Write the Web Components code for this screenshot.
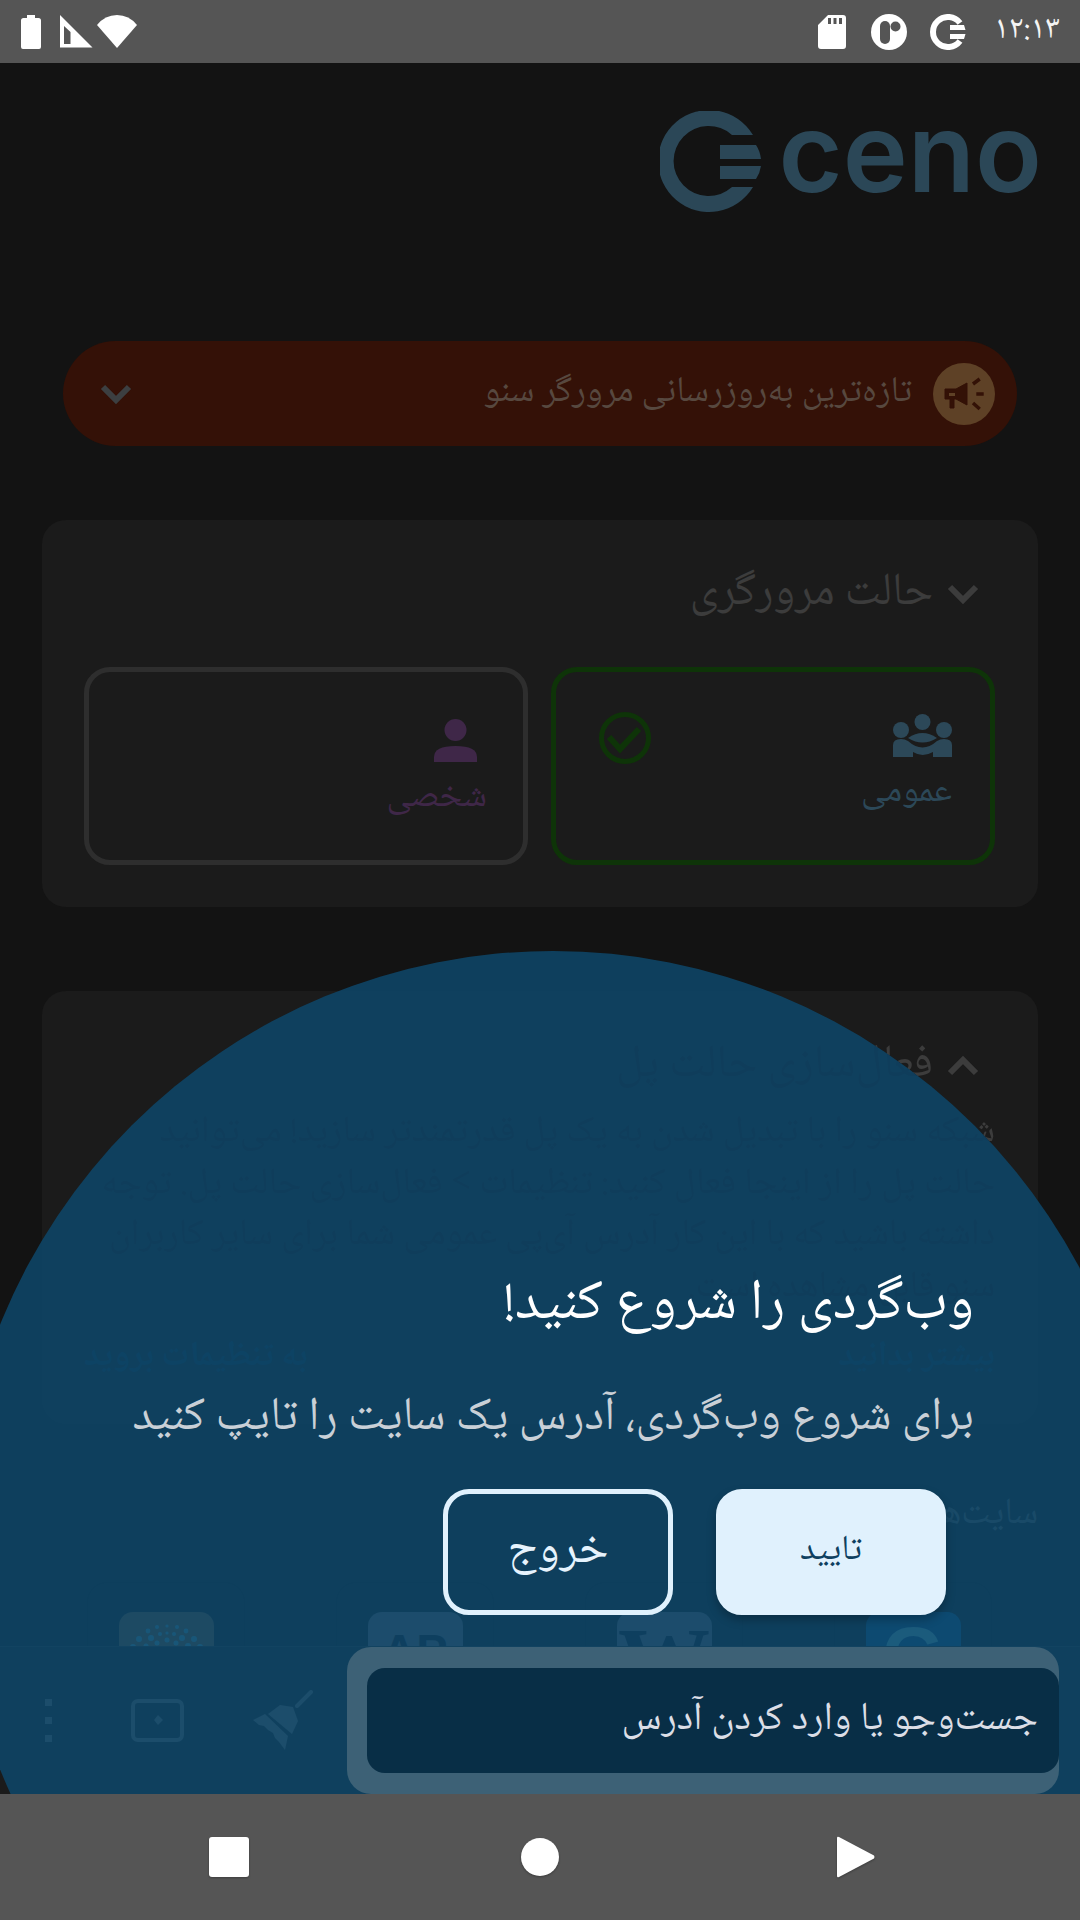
<!DOCTYPE html>
<html lang="fa" dir="rtl">
<head>
<meta charset="utf-8">
<style>
html,body{margin:0;padding:0;background:#131313}
body{width:1080px;height:1920px;overflow:hidden;font-family:"Noto Naskh Arabic","Noto Sans Arabic","DejaVu Sans",sans-serif}
</style>
</head>
<body>
<app-shell>
  <status-bar></status-bar>
  <main-area>
    <home-page>
      <ceno-logo></ceno-logo>
      <update-banner>تازه‌ترین به‌روزرسانی مرورگر سنو</update-banner>
      <mode-section></mode-section>
      <bridge-section></bridge-section>
      <sites-section></sites-section>
    </home-page>
    <bottom-bar></bottom-bar>
    <coach-mark></coach-mark>
  </main-area>
  <nav-bar></nav-bar>
</app-shell>
<script>
const FONT = '"Noto Naskh Arabic","Noto Sans Arabic","DejaVu Sans",sans-serif';
const GHOST = (out) => `color:transparent;background:radial-gradient(circle 596px at 553px 1547px,#180000 99.9%,${out} 100%) fixed;-webkit-background-clip:text;background-clip:text;`;
function def(name, html){
  customElements.define(name, class extends HTMLElement{
    constructor(){super();this.attachShadow({mode:'open'}).innerHTML=html;}
  });
}
const chevron = (up,c)=>`<svg width="32" height="20" viewBox="0 0 32 20"><path d="${up?'M3 17 16 4 29 17':'M3 3 16 16 29 3'}" fill="none" stroke="${c}" stroke-width="6"/></svg>`;

def('app-shell',`<style>:host{display:flex;flex-direction:column;width:1080px;height:1920px;background:#131313;direction:rtl}</style><slot></slot>`);

def('status-bar',`<style>
:host{display:flex;align-items:center;height:63px;flex:none;background:#555;direction:ltr;position:relative}
svg{display:block;flex:none}
.time{font:33px/1 ${FONT};color:#f4f4f4;margin:0 22px 0 29px;direction:rtl;width:62px;display:flex;justify-content:center;white-space:nowrap}
</style>
<svg style="margin-left:21px" width="20" height="34" viewBox="0 0 20 34"><path fill="#fff" d="M6 0h8v3h3.5A2.5 2.5 0 0 1 20 5.5V32a2 2 0 0 1-2 2H2a2 2 0 0 1-2-2V5.500A2.500 2.500 0 0 1 2.500 3H6z"/></svg>
<svg style="margin-left:19px" width="33" height="33" viewBox="0 0 33 33"><path fill="#fff" fill-rule="evenodd" d="M0 0 32.500 32.500H0zM4 11v18h6.500V17z"/></svg>
<svg style="margin-left:4px" width="40" height="34" viewBox="0 0 40 34"><path fill="#fff" d="M0 10Q8 0 20 0T40 10L20 33Z"/></svg>
<svg style="margin-left:auto" width="28" height="34" viewBox="0 0 28 34"><path fill="#fff" fill-rule="evenodd" d="M10 0h15a3 3 0 0 1 3 3v28a3 3 0 0 1-3 3H3a3 3 0 0 1-3-3V10zM10 3v6h3V3zM15.500 3v6h3V3zM21 3v6h3V3z"/></svg>
<svg style="margin-left:25px" width="36" height="36" viewBox="0 0 36 36"><circle cx="18" cy="18" r="18" fill="#fff"/><rect x="9" y="7" width="10" height="23" rx="5" fill="#555"/><circle cx="24.500" cy="12.500" r="5" fill="#555"/></svg>
<svg style="margin-left:22px" width="38" height="36" viewBox="0 0 38 36"><path d="M31 9A15 15 0 1 0 31 27" fill="none" stroke="#fff" stroke-width="6"/><path fill="#fff" d="M21 11h14l1.500 5H21zM21 20h15.500L35 25H21z"/></svg>
<div class="time">۱۲:۱۳</div>`);

def('main-area',`<style>:host{display:flex;flex-direction:column;flex:1;min-height:0;position:relative;overflow:hidden}</style><slot></slot>`);

def('home-page',`<style>:host{display:flex;flex-direction:column;flex:1;min-height:0;overflow:hidden;padding:48px 42px 0;box-sizing:border-box}</style><slot></slot>`);

def('ceno-logo',`<style>
:host{display:flex;align-items:center;direction:ltr;justify-content:flex-end;height:102px;flex:none;gap:17px;color:#2b4757}
span{font:600 110px/102px Inter,Lato,sans-serif;letter-spacing:0;position:relative;top:-10px;margin-right:-4px}
svg{display:block;flex:none}
</style>
<svg width="102" height="102" viewBox="0 0 102 102"><path fill="#2b4757" d="M93 24A51 51 0 1 0 93 76H72A35 35 0 1 1 72 24Z"/><path fill="#2b4757" d="M60 34H96Q100 40 101 48H60ZM60 55H101Q100 62 96 68H60Z"/></svg>
<span>ceno</span>`);

def('update-banner',`<style>
:host{display:flex;align-items:center;height:105px;flex:none;margin:128px 21px 0;border-radius:53px;background:#341107;padding:0 22px 0 37px;box-sizing:border-box;gap:21px;font:36px/1.2 ${FONT};color:#57483f;white-space:nowrap}
svg{display:block;flex:none}
.end{margin-inline-start:auto}
</style>
<svg width="62" height="62" viewBox="0 0 62 62"><circle cx="31" cy="31" r="31" fill="#5e4126"/><g fill="#331106" stroke="#331106"><path stroke-width="1" d="M12 26H23L34 20V42L23 36H21V45H17V36H12Z"/><path stroke-width="3.500" fill="none" d="M40 21 46.700 16M43.300 31H50.700M40 40 46.700 46"/></g><path d="M16 30H22V33H16Z" fill="#5e4126"/></svg>
<slot></slot>
<span class="end">${chevron(false,'#3c3f41')}</span>`);

const cardCss = `display:block;flex:none;background:#1b1b1b;border-radius:24px;box-sizing:border-box;padding:0 43px 0 42px;`;
const headCss = `.h{display:flex;align-items:center;gap:14px;height:60px}.h svg{display:block;flex:none;margin-right:16px}.t{font:46px/60px ${FONT};white-space:nowrap}`;

def('mode-option',`<style>
:host{display:flex;justify-content:space-between;align-items:flex-start;height:198px;box-sizing:border-box;border:5px solid var(--b,#2e2e2e);border-radius:26px;padding:40px 38px 0 43px;font:36px/44px ${FONT};color:var(--c)}
.col{display:flex;flex-direction:column;align-items:flex-start}
.ic{width:59px;display:flex;justify-content:center;height:var(--ih,48px);align-items:flex-end;}
svg{display:block}
.l{white-space:nowrap;margin-top:var(--lm,15px);margin-right:var(--lr,0)}
</style>
<div class="col"><div class="ic"><slot name="icon"></slot></div><div class="l"><slot></slot></div></div>
<slot name="check"></slot>`);

def('mode-section',`<style>
:host{${cardCss}margin-top:74px;padding-top:44px;padding-bottom:42px}
${headCss}.t{color:#3c3c3c}
.g{display:grid;grid-template-columns:1fr 1fr;gap:23px;margin-top:43px}
svg{display:block}
</style>
<div class="h">${chevron(false,'#3c3c3c')}<div class="t">حالت مرورگری</div></div>
<div class="g">
<mode-option style="--b:#0e3408;--c:#2c4858;--ih:45px;--lm:15px">
  <svg slot="icon" width="59" height="43" viewBox="0 0 59 43" fill="#2c4858"><circle cx="29.500" cy="8" r="8"/><circle cx="8" cy="16" r="8"/><circle cx="51" cy="16" r="8"/><path d="M15 24Q29.500 14 44 24Q29.500 33 15 24Z"/><path d="M0 43V31Q0 25 8 25Q12 25 15 27Q29.500 40 44 27Q47 25 51 25Q59 25 59 31V43H40V38Q29.500 44 20 38V43Z"/></svg>
  عمومی
  <svg slot="check" width="52" height="52" viewBox="0 0 52 52"><circle cx="26" cy="26" r="23.500" fill="none" stroke="#0e3408" stroke-width="5"/><path d="M10 25 21 37 40 17" fill="none" stroke="#0e3408" stroke-width="6"/></svg>
</mode-option>
<mode-option style="--c:#3f2748;--ih:50px;--lm:15px;--lr:-2px">
  <svg slot="icon" width="43" height="43" viewBox="0 0 43 43" fill="#3f2748"><circle cx="21.500" cy="11" r="11"/><path d="M0 43V38Q0 27 21.500 27Q43 27 43 38V43Z"/></svg>
  شخصی
</mode-option>
</div>`);

def('bridge-section',`<style>
:host{${cardCss}margin-top:84px;padding-top:45px;padding-bottom:41px}
${headCss}.t{${GHOST('#3c3c3c')}}
p{margin:11px 0 0;font:37px/51.500px ${FONT};${GHOST('#3c3c3c')}white-space:nowrap}
.links{display:flex;justify-content:space-between;margin-top:20px;font:700 35px/50px ${FONT};color:#0a2f4a;white-space:nowrap}
</style>
<div class="h">${chevron(true,'#3c3c3c')}<div class="t">فعال‌سازی حالت پل</div></div>
<p>شبکه سنو را با تبدیل شدن به یک پل قدرتمندتر سازید! می‌توانید<br>حالت پل را از اینجا فعال کنید: تنظیمات &gt; فعال‌سازی حالت پل. توجه<br>داشته باشید که با این کار آدرس آی‌پی عمومی شما برای سایر کاربران<br>سنو قابل مشاهده است.</p>
<div class="links"><span>بیشتر بدانید</span><span>به تنظیمات بروید</span></div>`);

def('site-tile',`<style>
:host{display:block;width:158px;height:190px;box-sizing:border-box;border:1px solid rgba(0,0,0,.5);border-radius:20px;padding-top:29px;flex:none}
.i{width:95px;height:95px;margin:auto;border-radius:14px;background:var(--bg);color:var(--fg);display:flex;justify-content:center;align-items:flex-start;font:var(--f);overflow:hidden;direction:ltr}
svg{display:block}
</style><div class="i"><slot></slot></div>`);

def('sites-section',`<style>
:host{display:block;flex:none}
.l{margin-top:71px;font:37px/40px ${FONT};color:#686868;white-space:nowrap}
.r{display:flex;direction:ltr;justify-content:space-between;margin:47px 46px 0 45px}
</style>
<div class="l">سایت‌های</div>
<div class="r">
<site-tile style="--bg:#816542;--fg:#5fc0e0;--f:700 70px/1 'Liberation Sans'"><svg width="95" height="70" viewBox="0 0 95 70" fill="#5fc0e0"><g><circle cx="48" cy="14" r="1.600"/><circle cx="38" cy="15" r="2"/><circle cx="58" cy="15" r="2"/><circle cx="29" cy="19" r="2.400"/><circle cx="67" cy="19" r="2.400"/><circle cx="48" cy="21" r="1.600"/><circle cx="41" cy="22" r="2"/><circle cx="55" cy="22" r="2"/><circle cx="32" cy="26" r="3"/><circle cx="63" cy="26" r="3"/><circle cx="20" cy="27" r="3"/><circle cx="75" cy="27" r="3"/><circle cx="48" cy="28" r="2.500"/><circle cx="14" cy="35" r="3"/><circle cx="81" cy="35" r="3"/><circle cx="38" cy="31" r="2.500"/><circle cx="57" cy="31" r="2.500"/><circle cx="27" cy="34" r="2.500"/><circle cx="69" cy="34" r="3"/></g></svg></site-tile>
<site-tile style="--bg:#797480;--fg:#151023;--f:700 47px/78px 'Liberation Sans'">AP</site-tile>
<site-tile style="--bg:#797480;--fg:#151023;--f:700 92px/97px 'Liberation Serif'">W</site-tile>
<site-tile style="--bg:#0b68ad;--fg:#77e3ff;--f:700 80px/88px 'Liberation Sans'">G</site-tile>
</div>`);

def('url-field',`<style>
:host{display:block;position:relative;z-index:3;width:712px;height:147px;flex:none;box-sizing:border-box;background:#3d6176;border-radius:24px;padding:21px 0 21px 20px}
div{height:100%;box-sizing:border-box;background:#082e46;border-radius:18px;padding:0 21px;display:flex;align-items:center;font:39.500px/1.2 ${FONT};color:#dbdee6;white-space:nowrap}
</style><div><slot></slot></div>`);

def('bottom-bar',`<style>
:host{display:flex;align-items:center;flex:none;background:#1b1b1b;padding-right:21px;box-sizing:border-box;border-top:1px solid #333;margin-top:-1px;height:148px}
svg{display:block;flex:none}
</style>
<url-field>جست‌وجو یا وارد کردن آدرس</url-field>
<svg style="margin-right:34px" width="60" height="61" viewBox="0 0 60 61" fill="#7a7a7a"><path d="M15 24 27 15 40 17 45 31 39 44Z"/><path d="M0 30 12 24 35 46 32 60 26 52 22 48 20 43 15 40 11 36 6 35Z"/><path d="M44 16 58 2" stroke="#7a7a7a" stroke-width="4" stroke-linecap="round"/></svg>
<svg style="margin-right:69px" width="53" height="43" viewBox="0 0 53 43"><rect x="2" y="2" width="49" height="39" rx="5" fill="none" stroke="#7a7a7a" stroke-width="4"/><path d="M27 16 32 21 27 26 23 21Z" fill="#7a7a7a"/></svg>
<svg style="margin-right:79px" width="7" height="43" viewBox="0 0 7 43" fill="#7a7a7a"><rect width="7" height="7"/><rect y="18" width="7" height="7"/><rect y="36" width="7" height="7"/></svg>`);

def('coach-mark',`<style>
:host{position:absolute;inset:0;z-index:2;display:flex;flex-direction:column;padding:1208px 106px 0 0;box-sizing:border-box;pointer-events:none}
.c{position:absolute;left:-43px;top:888px;width:1192px;height:1192px;border-radius:50%;background:rgba(14,70,105,.87);z-index:-1}
h1{margin:0;font:400 57px/70px ${FONT};color:#fff;white-space:nowrap}
p{margin:53px 0 0;font:47px/50px ${FONT};color:#c9d0d7;white-space:nowrap}
.b{display:flex;gap:43px;margin:45px 28px 0 0}
</style>
<div class="c"></div>
<h1>وب‌گردی را شروع کنید!</h1>
<p>برای شروع وب‌گردی، آدرس یک سایت را تایپ کنید</p>
<div class="b"><coach-button primary>تایید</coach-button><coach-button>خروج</coach-button></div>`);

def('coach-button',`<style>
:host{display:flex;align-items:center;justify-content:center;width:230px;height:126px;box-sizing:border-box;border-radius:26px;border:5px solid #e0f1fd;color:#e6f3fd;font:47px/1.2 ${FONT}}
:host([primary]){background:#e0f1fd;color:#0e4060;box-shadow:0 5px 10px rgba(0,0,0,.25);font-size:35px}
</style><slot></slot>`);

def('nav-bar',`<style>
:host{display:flex;align-items:center;height:126px;flex:none;background:#555;direction:ltr;position:relative;z-index:5;padding-left:209px;box-sizing:border-box}
svg{display:block;flex:none;filter:drop-shadow(0 1px 1px rgba(0,0,0,.3))}
</style>
<svg width="40" height="40" viewBox="0 0 40 40"><rect width="40" height="40" rx="3" fill="#fff"/></svg>
<svg style="margin-left:272px" width="38" height="38" viewBox="0 0 38 38"><circle cx="19" cy="19" r="19" fill="#fff"/></svg>
<svg style="margin-left:278px" width="38" height="42" viewBox="0 0 38 42"><path fill="#fff" d="M0 2Q0 0 2 1L37 19.500Q38 21 37 22.500L2 41Q0 42 0 40Z"/></svg>`);
</script>
</body>
</html>
